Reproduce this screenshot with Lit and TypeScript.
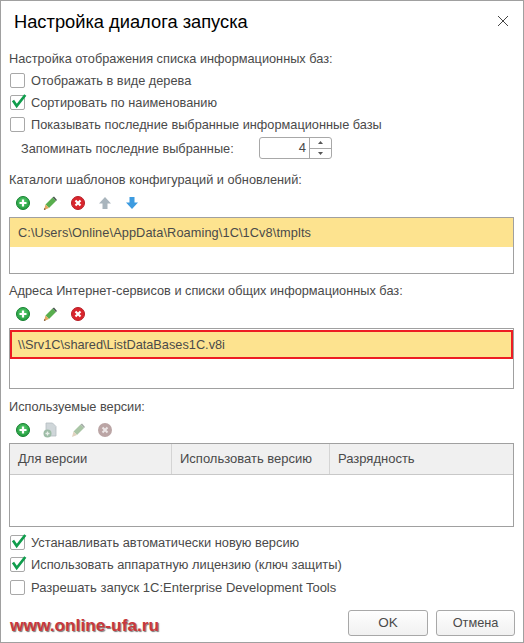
import { LitElement, html, css, svg } from "lit";
import { customElement } from "lit/decorators.js";

const plus = html`<svg width="16" height="16" viewBox="0 0 16 16"><defs><radialGradient id="g" cx="50%" cy="40%" r="60%"><stop offset="0" stop-color="#5ccf72"/><stop offset="1" stop-color="#1f9a3c"/></radialGradient></defs><circle cx="8" cy="8" r="6.5" fill="url(#g)" stroke="#178232"/><path d="M8 4.500v7M4.500 8h7" stroke="#fff" stroke-width="2.200"/></svg>`;
const pencil = html`<svg width="16" height="16" viewBox="0 0 16 16"><path d="M3.500 9.500L10.500 2.500L14 6L7 13Z" fill="#58ae4e"/><path d="M10.500 2.500L14 6L15 5L12 1.500Z" fill="#4a5a50"/><path d="M3.500 9.500L7 13L2 15Z" fill="#e3a860"/><path d="M2.500 13L3.800 14.200L1.800 15Z" fill="#6a4a28"/></svg>`;
const del = html`<svg width="16" height="16" viewBox="0 0 16 16"><circle cx="8" cy="8" r="6.500" fill="#d9252d" stroke="#b81e26"/><path d="M5.500 5.500L10.500 10.500M10.500 5.500L5.500 10.500" stroke="#fff" stroke-width="2.200"/></svg>`;
const up = html`<svg width="14" height="14" viewBox="0 0 14 14"><path d="M7 1L13 7.500H9.500V13H4.500V7.500H1Z" fill="#a9b5bd"/></svg>`;
const down = html`<svg width="14" height="14" viewBox="0 0 14 14"><path d="M7 13L1 6.500H4.500V1H9.500V6.500H13Z" fill="#3d9be0"/></svg>`;
const docOff = html`<svg width="16" height="16" viewBox="0 0 16 16"><path d="M4 1H10.500L14 4.500V14H4Z" fill="#cfd6d9" stroke="#b4bcc0" stroke-width=".8"/><circle cx="5.500" cy="11.500" r="4" fill="#9dbca6"/><path d="M5.500 9.500v4M3.500 11.500h4" stroke="#e8efe9" stroke-width="1.300"/></svg>`;
const pencilOff = html`<svg width="16" height="16" viewBox="0 0 16 16"><path d="M3.500 9.500L10.500 2.500L14 6L7 13Z" fill="#a9c5a5"/><path d="M10.500 2.500L14 6L15 5L12 1.500Z" fill="#a3aca6"/><path d="M3.500 9.500L7 13L2 15Z" fill="#e0d2bf"/></svg>`;
const delOff = html`<svg width="16" height="16" viewBox="0 0 16 16"><circle cx="8" cy="8" r="7" fill="#bba5a5"/><path d="M5.500 5.500L10.500 10.500M10.500 5.500L5.500 10.500" stroke="#ece6e6" stroke-width="2"/></svg>`;
const check = svg`<path d="M2 7.500L5.700 13L14.300 2" fill="none" stroke="#0f9d4c" stroke-width="2.700"/>`;

@customElement("app-root")
export class AppRoot extends LitElement {
  static styles = css`
    :host {
      display: flex; flex-direction: column; box-sizing: border-box;
      width: 524px; height: 643px; background: #fff;
      border: 1px solid #a0a0a0;
      font: 12.75px "Liberation Sans", Arial, sans-serif; color: #4a4a4a;
      padding: 0 8px; overflow: hidden;
    }
    .head { display: flex; justify-content: space-between; align-items: center; height: 42px; flex: none; padding: 0 5px; }
    .title { font-size: 18.3px; color: #000; }
    .close { display: block; margin: -2px 1px 0 0; }
    .label { height: 20px; line-height: 20px; flex: none; white-space: nowrap; }
    .l1 { margin-top: 6px; height: 21px; }
    .mt7 { margin-top: 7px; }
    .mt8 { margin-top: 8px; }
    .mt11 { margin-top: 11px; }
    .row { display: flex; align-items: center; height: 22px; flex: none; padding-left: 1px; gap: 6px; white-space: nowrap; }
    .row span:last-child { margin-top: -2px; }
    .lower .row span:last-child { font-size: 12.85px; }
    .lower .row:last-child { margin-top: 1px; }
    .lower .row:last-child span:last-child { font-size: 13px; }
    .lower { display: flex; flex-direction: column; flex: none; margin-top: 5px; }
    .box { width: 13px; height: 13px; margin-top: -1px; border: 1px solid #a8a8a8; border-radius: 2px; position: relative; flex: none; background: #fff; }
    .box svg { position: absolute; left: 0; top: -3px; overflow: visible; }
    .spin-row { display: flex; align-items: center; height: 22px; padding-left: 12px; flex: none; margin-top: 1px; white-space: nowrap; }
    .spin-label { width: 238px; }
    .spin { width: 73px; height: 22px; box-sizing: border-box; border: 1px solid #a8a8a8; border-radius: 3px; display: flex; }
    .spin-v { flex: 1; text-align: right; padding-right: 3px; line-height: 20px; font-size: 13px; }
    .spin-b { width: 21px; border-left: 1px solid #a8a8a8; display: flex; flex-direction: column; }
    .spin-b div { flex: 1; display: flex; align-items: center; justify-content: center; }
    .spin-b div + div { border-top: 1px solid #a8a8a8; }
    .tools { display: flex; align-items: center; height: 26px; box-sizing: border-box; flex: none; padding-left: 6px; gap: 11.25px; }
    .tools.t3 { padding-bottom: 1px; }
    .tools span { display: flex; justify-content: center; width: 16px; }
    .list { box-sizing: border-box; border: 1px solid #a0a0a0; width: 505px; flex: none; margin-top: 1px; }
    .l-a { height: 57px; }
    .l-a .item { letter-spacing: .1px; }
    .l-b { height: 61px; padding-top: 1px; }
    .item { background: #fde38f; height: 29px; line-height: 29px; padding-left: 8px; box-sizing: border-box; }
    .item.sel { border: 2px solid #ed1c24; line-height: 25px; padding-left: 6px; }
    .table { box-sizing: border-box; border: 1px solid #a0a0a0; width: 505px; height: 84px; flex: none; }
    .thead { display: grid; grid-template-columns: 162px 158px 1fr; height: 31px; border-bottom: 1px solid #c8c8c8; box-sizing: border-box; font-size: 13px; }
    .thead div { background: #f0f0f0; line-height: 30px; padding-left: 8px; border-right: 1px solid #d4d4d4; }
    .thead div:last-child { border-right: none; }
    .foot { display: flex; align-items: center; height: 26px; flex: none; margin-top: 11px; }
    .wm { font: bold 17.3px "Liberation Sans", sans-serif; color: #c8383c; text-shadow: 1px 1px 1px #777; flex: 1; padding-left: 1px; margin-top: 4px; }
    .btn { box-sizing: border-box; height: 26px; border: 1px solid #a8a8a8; border-radius: 3px; background: linear-gradient(#fefefe, #f1f1f1); text-align: center; line-height: 24px; }
    .ok { width: 80px; margin-right: 8px; font-size: 13.5px; }
    .cancel { width: 79px; }
  `;

  private box(on: boolean) {
    return html`<span class="box">${on ? html`<svg width="16" height="16" viewBox="0 0 16 16">${check}</svg>` : ""}</span>`;
  }

  private cb(text: string, on = false) {
    return html`<div class="row">${this.box(on)}<span>${text}</span></div>`;
  }

  render() {
    return html`
      <div class="head">
        <span class="title">Настройка диалога запуска</span>
        <svg class="close" width="12" height="12" viewBox="0 0 12 12"><path d="M1 1L11 11M11 1L1 11" stroke="#444" stroke-width="1"/></svg>
      </div>
      <div class="label l1">Настройка отображения списка информационных баз:</div>
      ${this.cb("Отображать в виде дерева")}
      ${this.cb("Сортировать по наименованию", true)}
      ${this.cb("Показывать последние выбранные информационные базы")}
      <div class="spin-row">
        <span class="spin-label">Запоминать последние выбранные:</span>
        <div class="spin">
          <div class="spin-v">4</div>
          <div class="spin-b">
            <div><svg width="5" height="3"><path d="M2.500 0L5 3H0Z" fill="#555"/></svg></div>
            <div><svg width="5" height="3"><path d="M0 0H5L2.500 3Z" fill="#555"/></svg></div>
          </div>
        </div>
      </div>
      <div class="label mt11">Каталоги шаблонов конфигураций и обновлений:</div>
      <div class="tools"><span>${plus}</span><span>${pencil}</span><span>${del}</span><span>${up}</span><span>${down}</span></div>
      <div class="list l-a"><div class="item">C:\\Users\\Online\\AppData\\Roaming\\1C\\1Cv8\\tmplts</div></div>
      <div class="label mt7">Адреса Интернет-сервисов и списки общих информационных баз:</div>
      <div class="tools"><span>${plus}</span><span>${pencil}</span><span>${del}</span></div>
      <div class="list l-b"><div class="item sel">\\\\Srv1C\\shared\\ListDataBases1C.v8i</div></div>
      <div class="label mt8">Используемые версии:</div>
      <div class="tools t3"><span>${plus}</span><span>${docOff}</span><span>${pencilOff}</span><span>${delOff}</span></div>
      <div class="table"><div class="thead"><div>Для версии</div><div>Использовать версию</div><div>Разрядность</div></div></div>
      <div class="lower">
        ${this.cb("Устанавливать автоматически новую версию", true)}
        ${this.cb("Использовать аппаратную лицензию (ключ защиты)", true)}
        ${this.cb("Разрешать запуск 1C:Enterprise Development Tools")}
      </div>
      <div class="foot">
        <span class="wm">www.online-ufa.ru</span>
        <div class="btn ok">OK</div>
        <div class="btn cancel">Отмена</div>
      </div>
    `;
  }
}
